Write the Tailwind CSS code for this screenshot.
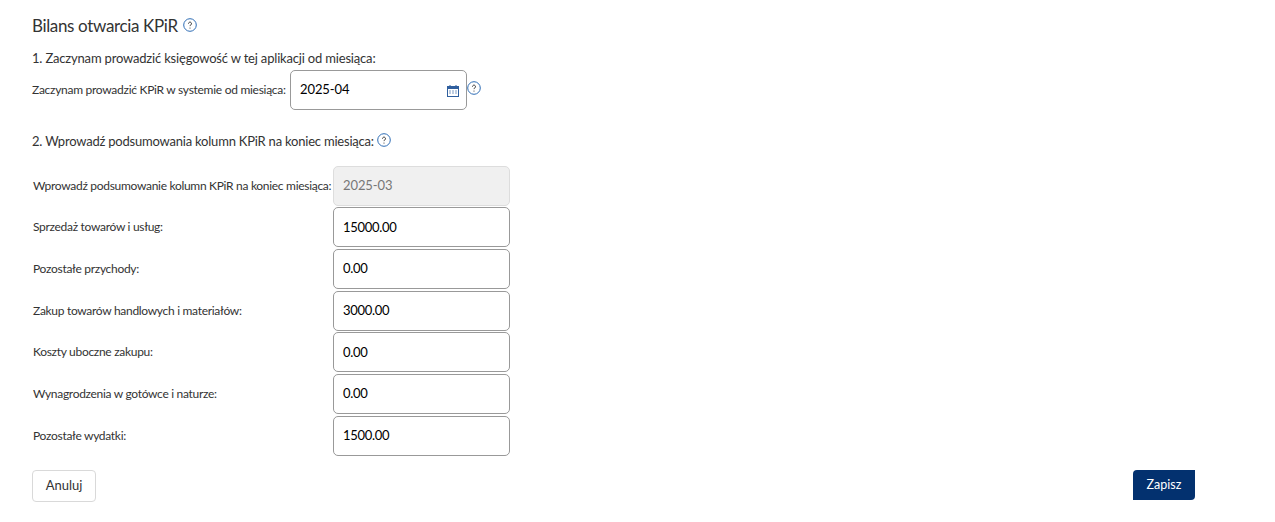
<!DOCTYPE html>
<html lang="pl">
<head>
    <meta charset="UTF-8">
    <title>Bilans otwarcia KPiR</title>
    <script src="https://cdn.jsdelivr.net/npm/@tailwindcss/browser@4"></script>
</head>
<body class="bg-white text-[#333] font-['Lato',sans-serif] h-[522px] overflow-hidden">
    <div class="px-[32px] pt-[15px]">
        <div class="flex items-center gap-[5px] h-[22px]">
            <h1 class="text-[17px] leading-[22px] tracking-[-0.35px] text-[#333]">Bilans otwarcia KPiR</h1>
            <svg class="w-[14px] h-[14px] -mt-[2px]" viewBox="0 0 14 14" fill="none"><circle cx="7" cy="7" r="6.3" stroke="#2f6db5"/><path d="M5.5 5.6a1.5 1.5 0 1 1 2.3 1.3c-.5.3-.8.6-.8 1.2" stroke="#333" stroke-width="1"/><circle cx="7" cy="10" r=".6" fill="#333"/></svg>
        </div>

        <p class="mt-[11px] text-[13px] leading-[20px] tracking-[-0.18px]">1. Zaczynam prowadzić księgowość w tej aplikacji od miesiąca:</p>

        <div class="flex items-center mt-[2px] h-[40px]">
            <label class="text-[12px] tracking-[-0.28px] w-[258px] whitespace-nowrap">Zaczynam prowadzić KPiR w systemie od miesiąca:</label>
            <div class="relative w-[177px] h-[40px] border border-[#999] rounded-[5px] flex items-center pl-[9px] text-[13px] text-black tracking-[-0.1px]">
                2025-04
                <svg class="absolute right-[7px] top-[14px] w-[12px] h-[12px]" viewBox="0 0 12 12" fill="none"><rect x=".5" y="1.5" width="11" height="10" stroke="#2f5f9e"/><rect x="1" y="2" width="10" height="2" fill="#2f5f9e"/><path d="M3 0v2M9 0v2" stroke="#2f5f9e"/><path d="M2 6h2M5 6h2M8 6h2M2 8h2M5 8h2M8 8h2" stroke="#7f9cc4"/></svg>
            </div>
            <svg class="w-[14px] h-[14px] -mt-[5px]" viewBox="0 0 14 14" fill="none"><circle cx="7" cy="7" r="6.3" stroke="#2f6db5"/><path d="M5.5 5.6a1.5 1.5 0 1 1 2.3 1.3c-.5.3-.8.6-.8 1.2" stroke="#333" stroke-width="1"/><circle cx="7" cy="10" r=".6" fill="#333"/></svg>
        </div>

        <div class="flex items-center gap-[3px] mt-[20px] h-[22px]">
            <p class="text-[13px] leading-[20px] tracking-[-0.21px]">2. Wprowadź podsumowania kolumn KPiR na koniec miesiąca:</p>
            <svg class="w-[14px] h-[14px] -mt-[3px]" viewBox="0 0 14 14" fill="none"><circle cx="7" cy="7" r="6.3" stroke="#2f6db5"/><path d="M5.5 5.6a1.5 1.5 0 1 1 2.3 1.3c-.5.3-.8.6-.8 1.2" stroke="#333" stroke-width="1"/><circle cx="7" cy="10" r=".6" fill="#333"/></svg>
        </div>

        <div class="mt-[13.6px] flex flex-col gap-[1.7px]">
            <div class="flex items-center h-[40px]">
                <label class="text-[12px] tracking-[-0.3px] w-[301px] pl-[1px] whitespace-nowrap">Wprowadź podsumowanie kolumn KPiR na koniec miesiąca:</label>
                <div class="w-[177px] h-[40px] bg-[#f0f0f0] border border-[#ddd] rounded-[5px] flex items-center pl-[9px] text-[13px] text-[#777] tracking-[-0.1px]">2025-03</div>
            </div>
            <div class="flex items-center h-[40px]">
                <label class="text-[12px] tracking-[-0.3px] w-[301px] pl-[1px]">Sprzedaż towarów i usług:</label>
                <div class="w-[177px] h-[40px] border border-[#999] rounded-[5px] flex items-center pl-[9px] text-[13px] tracking-[-0.3px] text-black">15000.00</div>
            </div>
            <div class="flex items-center h-[40px]">
                <label class="text-[12px] tracking-[-0.3px] w-[301px] pl-[1px]">Pozostałe przychody:</label>
                <div class="w-[177px] h-[40px] border border-[#999] rounded-[5px] flex items-center pl-[9px] text-[13px] tracking-[-0.3px] text-black">0.00</div>
            </div>
            <div class="flex items-center h-[40px]">
                <label class="text-[12px] tracking-[-0.3px] w-[301px] pl-[1px]">Zakup towarów handlowych i materiałów:</label>
                <div class="w-[177px] h-[40px] border border-[#999] rounded-[5px] flex items-center pl-[9px] text-[13px] tracking-[-0.3px] text-black">3000.00</div>
            </div>
            <div class="flex items-center h-[40px]">
                <label class="text-[12px] tracking-[-0.3px] w-[301px] pl-[1px]">Koszty uboczne zakupu:</label>
                <div class="w-[177px] h-[40px] border border-[#999] rounded-[5px] flex items-center pl-[9px] text-[13px] tracking-[-0.3px] text-black">0.00</div>
            </div>
            <div class="flex items-center h-[40px]">
                <label class="text-[12px] tracking-[-0.3px] w-[301px] pl-[1px]">Wynagrodzenia w gotówce i naturze:</label>
                <div class="w-[177px] h-[40px] border border-[#999] rounded-[5px] flex items-center pl-[9px] text-[13px] tracking-[-0.3px] text-black">0.00</div>
            </div>
            <div class="flex items-center h-[40px]">
                <label class="text-[12px] tracking-[-0.3px] w-[301px] pl-[1px]">Pozostałe wydatki:</label>
                <div class="w-[177px] h-[40px] border border-[#999] rounded-[5px] flex items-center pl-[9px] text-[13px] tracking-[-0.3px] text-black">1500.00</div>
            </div>
        </div>

        <div class="flex justify-between mt-[14.2px] pr-[48px]">
            <button class="w-[64px] h-[32px] border border-[#d9d9d9] rounded-[4px] text-[13px] text-[#333]">Anuluj</button>
            <button class="w-[62px] h-[30px] bg-[#03316f] text-white text-[12.5px] rounded-tl-[4px] rounded-br-[4px]">Zapisz</button>
        </div>
    </div>
</body>
</html>
